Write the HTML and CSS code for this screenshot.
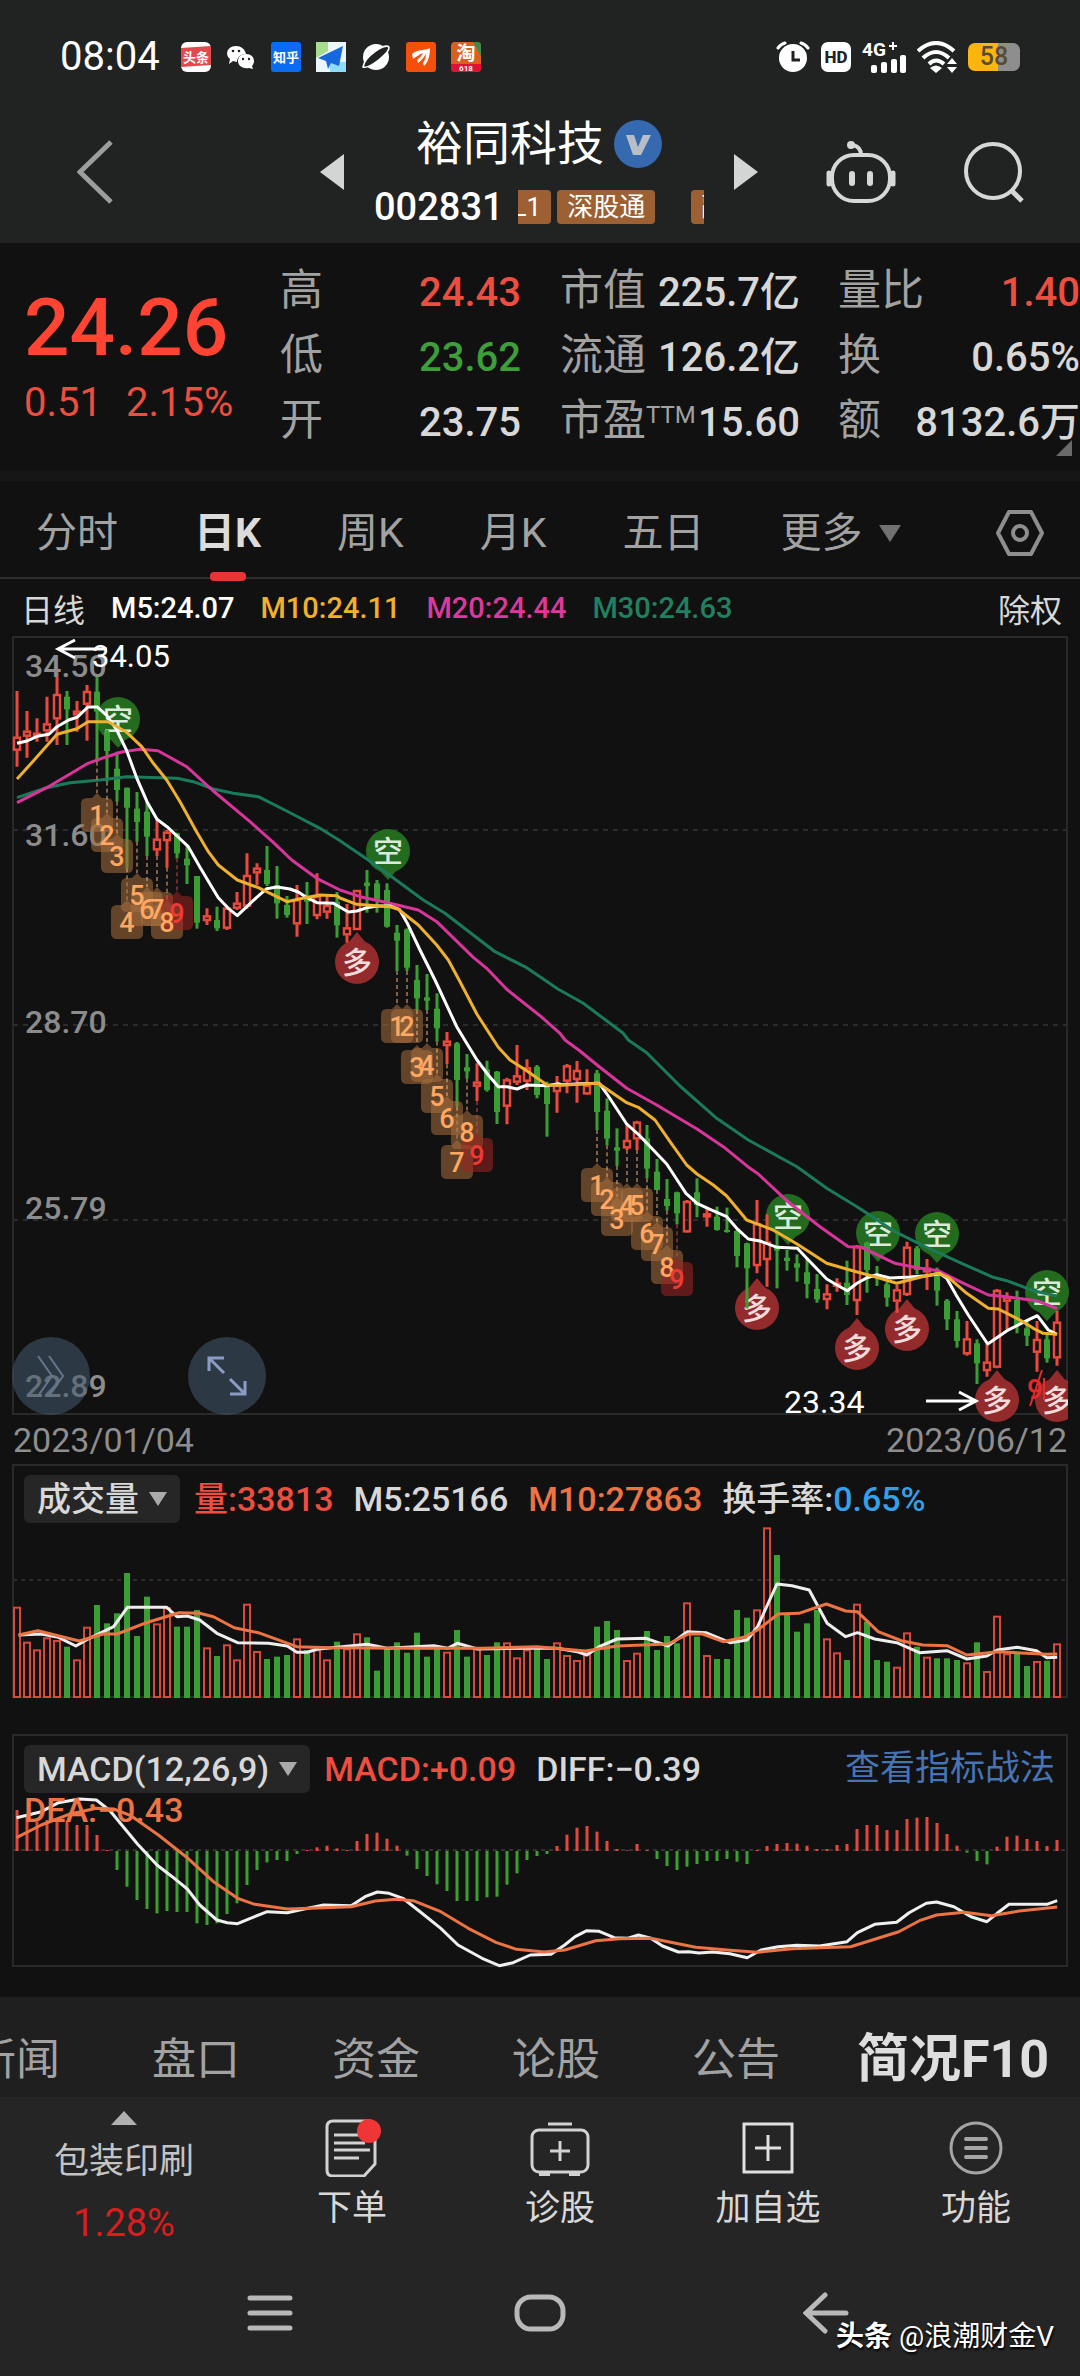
FILE: index.html
```html
<!DOCTYPE html>
<html lang="zh-CN">
<head>
<meta charset="utf-8">
<meta name="viewport" content="width=device-width, initial-scale=1">
<title>裕同科技 002831</title>
<link rel="stylesheet" href="styles.css">
</head>
<body>
<header class="top">
  <div class="status">
    <span class="clock">08:04</span>
    <div class="apps">
      <svg viewBox="0 0 30 30"><rect width="30" height="30" rx="6" fill="#fff"/><path d="M0 6L30 4V23L0 25Z" fill="#e2484c"/><text x="15" y="20" class="app-t" font-size="13">头条</text></svg>
      <svg viewBox="0 0 30 30" fill="#fff"><path d="M10 4c5 0 9 3 10 8-5 0-9 3-9 8l-4-1-4 3 1-5C-2 12 2 4 10 4z"/><path d="M20 12c5 0 8 3 8 7 0 2-1 4-2 5l1 3-4-1c-6 1-11-2-11-7 0-4 3-7 8-7z"/><g fill="#212322"><circle cx="7" cy="9" r="1.300"/><circle cx="13" cy="9" r="1.300"/><circle cx="17" cy="17" r="1.200"/><circle cx="23" cy="17" r="1.200"/></g></svg>
      <svg viewBox="0 0 30 30"><rect width="30" height="30" rx="3" fill="#0a6cf0"/><text x="15" y="20" class="app-t" font-size="13">知乎</text></svg>
      <svg viewBox="0 0 30 30"><rect width="30" height="30" fill="#eaf6fb"/><path d="M0 0h12v9L0 16z" fill="#a9dc8c"/><path d="M14 20h16v10H14z" fill="#8fdcf8"/><path d="M2 16L27 4L23 24L15 21L12 27L10 19Z" fill="#1668dc"/></svg>
      <svg viewBox="0 0 30 30"><circle cx="15" cy="15" r="13" fill="#fff"/><path d="M2 25C8 27 29 11 28 5C24 1 4 14 2 25Z" fill="#212322" stroke="#fff" stroke-width="1.500"/></svg>
      <svg viewBox="0 0 30 30"><rect width="30" height="30" rx="3" fill="#f4500c"/><path d="M6 12C11 7 18 9 24 6C24 14 22 20 18 24L17 21C19 18 20 15 20 12C18 15 16 18 12 21L11 18C14 16 16 13 17 11C14 12 10 15 7 17Z" fill="#fff"/></svg>
      <svg viewBox="0 0 30 30"><rect width="30" height="30" rx="4" fill="#d9611f"/><path d="M22 0h4q4 0 4 4v10z" fill="#3e8a4a"/><path d="M0 22h30v4q0 4-4 4H4q-4 0-4-4z" fill="#dc1236"/><text x="15" y="18" class="app-t" font-size="19">淘</text><text x="15" y="29" class="app-t" font-size="8">618</text></svg>
    </div>
    <div class="system">
      <svg class="w34" viewBox="0 0 34 32"><circle cx="17" cy="17" r="14" fill="#fff"/><path d="M17 10V19H24" fill="none" stroke="#212322" stroke-width="3"/><path d="M2 7Q5 3 9 2M32 7Q29 3 25 2" stroke="#fff" stroke-width="3" fill="none" stroke-linecap="round"/></svg>
      <svg class="w30" viewBox="0 0 30 30"><rect width="30" height="30" rx="7" fill="#fff"/><text x="15" y="21" text-anchor="middle" font-size="17" font-weight="800" fill="#212322">HD</text></svg>
      <svg class="w44" viewBox="0 0 44 32" fill="#fff"><text x="0" y="15" font-size="19" font-weight="700">4G</text><path d="M27 5h8M31 1v8" stroke="#fff" stroke-width="2"/><rect x="9" y="24" width="6" height="8" rx="2"/><rect x="19" y="21" width="6" height="11" rx="2"/><rect x="29" y="18" width="6" height="14" rx="2"/><rect x="38" y="14" width="6" height="18" rx="2"/></svg>
      <svg class="w40" viewBox="0 0 40 32" fill="none" stroke="#fff" stroke-width="4"><path d="M1 10Q19-6 37 10M6 17Q19 5 32 17M12 23Q19 16 27 23"/><path d="M19 32L13 27Q19 22 25 27ZM35 17l5 6h-10zM35 32l5-6h-10z" fill="#fff" stroke="none"/></svg>
      <span class="battery">58</span>
    </div>
  </div>
  <div class="title-row">
    <button class="icon-btn" aria-label="返回"><svg width="36" height="64" viewBox="0 0 36 64" fill="none" stroke="#9c9d9d" stroke-width="5"><path d="M34 2L3 32L34 62"/></svg></button>
    <div class="switcher">
      <button class="icon-btn" aria-label="上一只"><svg width="24" height="36" viewBox="0 0 24 36"><path d="M24 0V36L0 18Z" fill="#d3d5d4"/></svg></button>
      <div class="stock">
        <h1>裕同科技 <svg width="48" height="48" viewBox="0 0 48 48"><circle cx="24" cy="24" r="24" fill="#3569b0"/><path d="M12 15H20L24 27L29 15H37L27 35H19Z" fill="#b9bec6"/></svg></h1>
        <div class="code-row"><span>002831</span><div class="tags"><span class="tag first">L1</span><span class="tag">深股通</span><span class="tag last">融</span></div></div>
      </div>
      <button class="icon-btn" aria-label="下一只"><svg width="24" height="36" viewBox="0 0 24 36"><path d="M0 0V36L24 18Z" fill="#d3d5d4"/></svg></button>
    </div>
    <div class="actions">
      <button class="icon-btn" aria-label="智能助手"><svg width="70" height="64" viewBox="0 0 70 64" fill="none" stroke="#d6d8d7" stroke-width="4" stroke-linecap="round"><path d="M35 15Q35 7 27 5"/><circle cx="25" cy="5" r="2" fill="#d6d8d7"/><rect x="6" y="15" width="58" height="46" rx="22"/><path d="M3 33V44M67 33V44" stroke-width="5"/><path d="M26 34V43M44 34V43" stroke-width="6"/></svg></button>
      <button class="icon-btn" aria-label="搜索"><svg width="62" height="62" viewBox="0 0 62 62" fill="none" stroke="#d6d8d7" stroke-width="4"><circle cx="29" cy="30" r="27"/><path d="M47 49L58 60" stroke-width="5"/></svg></button>
    </div>
  </div>
</header>

<main>
  <section class="quote">
    <div class="price">
      <strong>24.26</strong>
      <div class="change"><span>0.51</span><span>2.15%</span></div>
    </div>
    <dl class="col-a">
      <div><dt>高</dt><dd class="up">24.43</dd></div>
      <div><dt>低</dt><dd class="down">23.62</dd></div>
      <div><dt>开</dt><dd>23.75</dd></div>
    </dl>
    <dl class="col-b">
      <div><dt>市值</dt><dd>225.7亿</dd></div>
      <div><dt>流通</dt><dd>126.2亿</dd></div>
      <div><dt>市盈<sup>TTM</sup></dt><dd>15.60</dd></div>
    </dl>
    <dl class="col-c">
      <div><dt>量比</dt><dd class="up">1.40</dd></div>
      <div><dt>换</dt><dd>0.65%</dd></div>
      <div><dt>额</dt><dd>8132.6万</dd></div>
    </dl>
    <i class="corner"></i>
  </section>

  <nav class="periods">
    <a href="#">分时</a><a href="#" class="on">日K</a><a href="#">周K</a><a href="#">月K</a><a href="#">五日</a><a href="#">更多<i class="caret"></i></a>
    <button class="icon-btn gear" aria-label="设置"><svg width="48" height="48" viewBox="0 0 48 48" fill="none" stroke="#8e8e8e" stroke-width="4" stroke-linejoin="round"><path d="M13 3H35L46 24L35 45H13L2 24Z"/><circle cx="24" cy="24" r="7"/></svg></button>
  </nav>

  <div class="legend"><span class="cjk">日线</span><span class="w">M5:24.07</span><span class="y">M10:24.11</span><span class="p">M20:24.44</span><span class="t">M30:24.63</span><span class="cjk end">除权</span></div>

  <section class="kline">
    <svg id="kline" viewBox="0 636 1080 780" role="img" aria-label="日K线"></svg>
    <button class="round collapse" aria-label="收起"><svg width="30" height="44" viewBox="0 0 30 44" fill="none" stroke="#66758c" stroke-width="2"><path d="M2 2L16 22L2 42M13 2L27 22L13 42"/></svg></button>
    <button class="round expand" aria-label="全屏"><svg width="40" height="40" viewBox="0 0 40 40" fill="none" stroke="#8c9bc4" stroke-width="3"><path d="M2 15V2H17M2 2L17 17M38 25V38H23M38 38L23 23"/></svg></button>
  </section>
  <div class="dates"><time>2023/01/04</time><time>2023/06/12</time></div>

  <section class="panel">
    <svg id="volume" viewBox="0 1464 1080 234" role="img" aria-label="成交量"></svg>
    <div class="panel-head"><button class="pick">成交量<i class="caret"></i></button><span class="up">量:33813</span><span>M5:25166</span><span class="o">M10:27863</span><span>换手率:<b>0.65%</b></span></div>
  </section>

  <section class="panel macd">
    <svg id="macd" viewBox="0 1734 1080 234" role="img" aria-label="MACD"></svg>
    <div class="panel-head"><button class="pick">MACD(12,26,9)<i class="caret"></i></button><span class="up">MACD:+0.09</span><span>DIFF:−0.39</span><a href="#">查看指标战法</a><span class="o dea">DEA:−0.43</span></div>
  </section>
</main>

<nav class="sections"><a href="#">新闻</a><a href="#">盘口</a><a href="#">资金</a><a href="#">论股</a><a href="#">公告</a><a href="#" class="on">简况F10</a></nav>

<footer>
  <div class="toolbar">
    <button class="industry"><i class="tri"></i><span>包装印刷</span><span class="pct">1.28%</span></button>
    <button><svg width="58" height="58" viewBox="0 0 58 58" fill="none" stroke="#d2d2d2" stroke-width="3"><path d="M10 2H46Q52 2 52 8V45L41 57H10Q4 57 4 51V8Q4 2 10 2Z"/><path d="M11 16H38M11 24H42M11 31H47M11 39H36"/><circle cx="46" cy="12" r="12" fill="#ee3636" stroke="none"/></svg>下单</button>
    <button><svg width="60" height="58" viewBox="0 0 60 58" fill="none" stroke="#d2d2d2" stroke-width="3"><rect x="2" y="11" width="56" height="42" rx="7"/><path d="M18 5H42M20 32H40M30 22V42"/><path d="M9 55H20M39 55H50" stroke-width="4"/></svg>诊股</button>
    <button><svg width="54" height="58" viewBox="0 0 54 58" fill="none" stroke="#e0e0e0" stroke-width="3"><rect x="3" y="5" width="48" height="48"/><path d="M14 29H40M27 16V42"/></svg>加自选</button>
    <button><svg width="56" height="58" viewBox="0 0 56 58" fill="none" stroke="#a5a5a5" stroke-width="3"><circle cx="28" cy="29" r="25"/><path d="M18 20H38M18 29H38M18 38H38" stroke-width="4" stroke-linecap="round"/></svg>功能</button>
  </div>
  <div class="sysnav">
    <button class="icon-btn" aria-label="最近任务"><svg width="46" height="42" viewBox="0 0 46 42" stroke="#b9b9b9" stroke-width="5" stroke-linecap="round"><path d="M3 6H43M3 21H43M3 36H43"/></svg></button>
    <button class="icon-btn" aria-label="主页"><svg width="52" height="42" viewBox="0 0 52 42" fill="none" stroke="#b9b9b9" stroke-width="5"><rect x="3" y="5" width="46" height="32" rx="14"/></svg></button>
    <button class="icon-btn" aria-label="返回"><svg width="46" height="42" viewBox="0 0 46 42" fill="none" stroke="#b9b9b9" stroke-width="5" stroke-linecap="round"><path d="M22 3L3 21L22 39M4 21H43"/></svg></button>
  </div>
  <p class="credit"><b>头条</b> @浪潮财金V</p>
</footer>
<script src="chart.js"></script>
</body>
</html>
```

FILE: styles.css
```css
* { box-sizing: border-box; }
body {
  margin: 0;
  background: #111;
  color: #d8d8d8;
  font-family: Roboto, "Noto Sans CJK SC", sans-serif;
  overflow-x: hidden;
}
button { border: 0; padding: 0; background: none; color: inherit; font: inherit; }
a { color: inherit; text-decoration: none; }
svg { display: block; }
.icon-btn { flex: none; }

/* status bar and title */
.top { background: #212322; color: #fff; }
.status { display: flex; align-items: center; height: 114px; padding: 0 60px; }
.clock { font-size: 40px; line-height: 48px; }
.apps { display: flex; gap: 15px; margin-left: 21px; }
.apps svg { width: 30px; height: 30px; }
.app-t { text-anchor: middle; fill: #fff; font-weight: 700; }
.system { display: flex; align-items: center; gap: 11px; margin-left: auto; }
.system svg { height: 32px; }
.w34 { width: 34px; }
.w30 { width: 30px; }
.w44 { width: 44px; }
.w40 { width: 40px; }
.battery {
  width: 52px; height: 28px; border-radius: 7px;
  background: linear-gradient(90deg, #fcb50c 58%, #8e8e8e 58%);
  color: #574c33; font-size: 25px; line-height: 28px; font-weight: 500; text-align: center;
}
.title-row { display: flex; align-items: center; gap: 68px; height: 129px; padding: 0 54px 13px 77px; }
.switcher { display: flex; align-items: center; gap: 30px; margin-left: auto; }
.actions { display: flex; align-items: center; gap: 68px; }
.stock { width: 330px; height: 116px; }
h1 { display: flex; align-items: center; justify-content: center; gap: 10px; margin: 0; font-size: 47px; line-height: 60px; font-weight: 400; }
.code-row { display: flex; align-items: center; gap: 14px; font-size: 38px; line-height: 66px; font-weight: 500; }
.tags { display: flex; gap: 6px; flex: 1; overflow: hidden; }
.tag { flex: none; padding: 0 10px; border-radius: 4px; background: #9c6033; font-size: 26px; line-height: 34px; font-weight: 400; }
.tag.first { margin-left: -15px; }
.tag.last { margin-left: 30px; }

/* quote figures */
.quote { position: relative; display: flex; height: 227px; padding-top: 16px; }
.price { width: 280px; padding: 20px 0 0 24px; color: #ff4433; }
.price strong { display: block; font-size: 80px; line-height: 98px; font-weight: 500; }
.change { display: flex; gap: 24px; font-size: 40px; line-height: 52px; color: #ec4e40; }
dl { margin: 0; }
dl div { display: flex; align-items: center; justify-content: space-between; height: 65px; line-height: 60px; }
dt { font-size: 43px; color: #a2a2a2; white-space: nowrap; padding-bottom: 4px; }
dd { margin: 0; padding-top: 2px; font-size: 40px; font-weight: 500; white-space: nowrap; }
sup { font-size: 24px; line-height: 24px; vertical-align: 12px; }
.col-a { width: 241px; }
.col-b { flex: 1; margin: 0 38px 0 39px; }
.col-c { width: 242px; }
.up { color: #ec4e40; }
.down { color: #3d9e3a; }
.corner { position: absolute; right: 8px; bottom: 14px; border: 8px solid; border-color: transparent #6a6a6a #6a6a6a transparent; }

.periods { display: flex; align-items: center; gap: 76px; height: 109px; padding: 8px 36px 0; border-top: 11px solid #161616; border-bottom: 2px solid #2e2e2e; font-size: 41px; line-height: 60px; color: #a2a2a2; white-space: nowrap; }
.periods a { display: flex; align-items: center; }
.periods .on { position: relative; color: #dcdcdc; font-weight: 700; }
.periods .on::after { content: ""; position: absolute; left: 50%; bottom: -18px; width: 36px; height: 9px; margin-left: -18px; border-radius: 4px; background: #e83434; }
.caret { flex: none; border: 11px solid transparent; border-top: 17px solid #717171; border-bottom: 0; margin-left: 16px; }
.gear { margin-left: auto; }
.legend { display: flex; align-items: center; gap: 26px; height: 57px; padding-left: 21px; padding-right: 18px; font-size: 29px; font-weight: 500; white-space: nowrap; }
.legend .cjk { font-size: 32px; font-weight: 400; }
.legend .w { color: #fff; }
.legend .y { color: #f0b02c; }
.legend .p { color: #db3a9c; }
.legend .t { color: #218060; }
.legend .end { margin-left: auto; }

/* charts */
.kline { position: relative; }
.kline svg, .panel svg { overflow: visible; }
#kline, #volume, #macd { width: 100%; height: auto; }
.round { position: absolute; bottom: 1px; display: flex; align-items: center; justify-content: center; width: 78px; height: 78px; border-radius: 50%; background: rgba(68, 90, 110, .55); }
.collapse { left: 12px; }
.expand { left: 188px; }
.dates { display: flex; justify-content: space-between; height: 48px; padding: 0 13px; font-size: 34px; line-height: 48px; color: #8e8e8e; }
.panel { display: grid; }
.panel > * { grid-area: 1 / 1; }
.panel-head { z-index: 1; display: flex; flex-wrap: wrap; align-content: flex-start; align-items: center; column-gap: 20px; padding: 11px 25px 0 24px; font-size: 34px; font-weight: 500; line-height: 48px; white-space: nowrap; }
.panel-head .caret { border-width: 14px 9px 0; border-top-color: #aaa; margin-left: 10px; }
.panel-head b { color: #35a0ea; font-weight: 500; }
.panel-head a { margin-left: auto; color: #4674b4; font-size: 35px; font-weight: 400; }
.pick { display: flex; align-items: center; height: 48px; padding: 0 13px; border-radius: 6px; background: #262626; margin-right: -6px; }
.o { color: #ec7444; }
.dea { width: 100%; line-height: 34px; }
.macd { margin-top: 36px; margin-bottom: 29px; }

/* bottom */
.sections { display: flex; align-items: center; gap: 92px; height: 100px; padding-top: 26px; background: #1f1f1f; overflow: hidden; font-size: 44px; line-height: 60px; color: #a2a2a2; white-space: nowrap; }
.sections a:first-child { margin-left: -28px; }
.sections .on { margin-left: -15px; color: #dedede; font-size: 52px; font-weight: 700; }
footer { position: relative; background: #252525; }
.toolbar { display: grid; grid-template-columns: 248px repeat(4, 1fr); height: 153px; font-size: 35px; line-height: 48px; }
.toolbar button { display: flex; flex-direction: column; align-items: center; gap: 8px; padding-top: 22px; }
.toolbar .industry { gap: 13px; padding-top: 14px; color: #c4c4c4; }
.tri { border: 13px solid transparent; border-bottom: 14px solid #b0b0b0; border-top: 0; }
.pct { font-size: 38px; color: #d81e1e; }
.sysnav { display: flex; align-items: center; justify-content: space-between; height: 126px; padding: 0 231px 0 247px; }
.sysnav :nth-child(2) { margin-right: 16px; }
.credit { position: absolute; right: 26px; bottom: 20px; margin: 0; color: #fff; font-size: 28px; line-height: 38px; text-shadow: 1px 2px 2px #000; }
```

FILE: chart.js
```js
const RED = '#ea4a3c', GREEN = '#3a9e35', ORANGE = '#ec7444';
const xAt = i => 17 + 10 * i;

// direction, high, low, body top, body bottom; three runs, each with its own base
const runs = [
  [630, `r183,410,320,362 r243,383,302,320 r265,335,308,320 r200,335,280,304 r115,345,192,268 g183,345,200,238 r213,305,242,256 r165,332,183,224 g140,395,185,245 g300,455,305,363 g365,515,416,480 g473,715,473,533 g486,635,536,576 g515,678,545,620 r570,678,626,661 r600,713,605,633 g608,685,610,670 g650,762,686,706 g738,896,738,878 r835,885,856,873 g830,903,870,895 r833,900,833,896 r786,840,818,836 r670,836,735,830 r700,766,713,730 g648,768,720,762 g708,866,765,820 g798,863,825,855 r765,920,808,883 g756,882,800,815 r730,868,798,858 r795,866,825,848 g786,923,815,886`],
  [780, `r372,488,442,466 r330,450,330,450 g270,398,308,318 g300,398,310,360 g310,443,330,440 g435,573,458,482 g445,573,448,563 g555,690,600,655 g582,690,652,662 g640,785,686,745 r756,853,782,798 g786,980,790,900 g822,896,862,874 r850,963,905,920 g842,935,868,930 g873,1032,875,996 r893,1033,898,980 r795,915,886,908 r838,930,862,905 g855,955,860,945 g905,1070,912,972 r888,998,915,936 r852,940,856,905 r843,968,870,900 r868,945,915,943 g870,1050,880,996 g955,1096,992,1076 g1045,1158,1102,1112 r1030,1110,1080,1105 r1022,1110,1025,1078`],
  [1040, `g255,415,295,386 g357,450,395,450 g417,512,477,498 g455,553,457,520 r480,578,483,577 g415,532,457,495 r505,560,520,530 g500,572,530,570 g503,578,570,576 g570,682,573,648 g608,805,610,685 r480,700,550,678 r523,740,605,660 g580,745,620,632 g630,692,653,663 g643,725,670,683 g655,775,697,732 g702,788,747,778 r733,808,760,780 r715,755,728,735 g662,795,728,765 r615,825,618,783 g605,758,608,690 g678,738,703,712 g725,800,733,773 r735,818,748,785 r605,768,620,765 g618,703,625,690 r657,750,683,697 g683,797,698,752 g777,870,782,838 g813,923,838,903 r843,947,895,943 g898,1032,910,970 r912,1010,965,993 r747,985,750,983 r757,868,770,785 g752,880,780,855 g840,918,865,887 r843,995,897,938 g885,968,898,955 r812,977,845,955`]
];
const candles = runs.flatMap(([base, rows]) => rows.split(' ').map(r => {
  const [hi, lo, top, bot] = r.slice(1).split(',').map(v => base + v / 3);
  return { up: r[0] === 'r', hi, lo, top, bot };
}));

const scale = (s, x0, y0, kx, ky) => s.split(' ').map(p => {
  const [x, y] = p.split(',');
  return `${(x0 + x / kx).toFixed(1)},${(y0 + y / ky).toFixed(1)}`;
}).join(' ');
const line = (pts, color, w = 3) =>
  `<polyline points="${pts}" fill="none" stroke="${color}" stroke-width="${w}" stroke-linejoin="round"/>`;
const joined = (a, b, c) => [scale(a, 0, 630, 3, 3), scale(b, 340, 780, 3, 3), scale(c, 560, 1040, 3, 3)].join(' ');
const label = (x, cy, s, size, color, extra = '') =>
  `<text x="${x}" y="${cy + Math.round(size * 0.36)}" font-size="${size}" fill="${color}" ${extra}>${s}</text>`;
const frame = (y, h) => `<rect x="13" y="${y}" width="1054" height="${h}" fill="none" stroke="#292929" stroke-width="2"/>`;

// daily candles
let k = frame(637, 777);
for (const y of [830, 1025, 1220]) k += `<path d="M13 ${y}H1067" stroke="#2c2c2c" stroke-width="2" stroke-dasharray="5 5"/>`;

for (const [x, y] of [[118, 719], [388, 851], [788, 1216], [878, 1233], [937, 1234], [1047, 1292]])
  k += `<circle cx="${x}" cy="${y}" r="22" fill="#236b1e"/><path d="M${x - 9} ${y + 19}L${x} ${y + 29}L${x + 9} ${y + 19}" fill="#236b1e"/>` +
    label(x, y, '空', 30, '#dceadb', 'text-anchor="middle" font-weight="500"');
for (const [x, y] of [[357, 962], [757, 1308], [857, 1348], [907, 1329], [997, 1400], [1057, 1400]])
  k += `<g${x > 1050 ? ' clip-path="url(#edge)"' : ''}><circle cx="${x}" cy="${y}" r="22" fill="#932b2d"/><path d="M${x - 9} ${y - 19}L${x} ${y - 30}L${x + 9} ${y - 19}" fill="#932b2d"/>` +
    label(x, y, '多', 30, '#f2dcdc', 'text-anchor="middle" font-weight="500"') + '</g>';
k += '<clipPath id="edge"><rect x="0" y="636" width="1068" height="800"/></clipPath>';

candles.forEach((c, i) => {
  const x = xAt(i);
  if (c.up) {
    k += `<path d="M${x} ${c.hi}V${c.top}M${x} ${c.bot}V${Math.max(c.lo, c.bot)}" stroke="${RED}" stroke-width="3"/>` +
      `<rect x="${x - 3}" y="${c.top + 1}" width="6" height="${Math.max(c.bot - c.top - 2, 2)}" fill="none" stroke="${RED}" stroke-width="2.500"/>`;
  } else {
    k += `<path d="M${x} ${c.hi}V${c.lo}" stroke="${GREEN}" stroke-width="3"/>` +
      `<rect x="${x - 3}" y="${c.top}" width="6" height="${c.bot - c.top}" fill="${GREEN}"/>`;
  }
});

k += line(joined(
  '51,503 140,473 210,458 300,450 380,440 531,445 580,455 640,477 700,490 775,500 860,543 960,595 1020,632',
  '0,182 85,240 145,283 250,360 315,400 465,515 560,563 655,628 730,670 850,760',
  '205,0 260,38 360,138 470,235 565,300 711,380 800,445 891,500 1005,575 1085,615 1200,668 1300,712 1340,722 1420,752 1491,768'), '#1b7a5c');
k += line(joined(
  '51,518 140,473 210,432 264,400 320,380 365,366 420,358 474,362 560,410 640,483 750,575 820,637 875,690 950,745',
  '0,330 60,350 150,370 235,390 290,425 400,532 440,565 500,628 600,707 660,760',
  '15,0 60,33 115,78 200,145 290,195 411,267 490,320 570,385 595,402 680,482 780,560 865,620 905,622 1005,670 1071,683 1135,692 1200,725 1285,765 1340,770 1430,782 1491,806'), '#d8359a');
k += line(joined(
  '51,340 81,333 111,319 146,313 171,290 206,270 231,262 264,231 292,231 320,256 350,300 380,362 411,446 441,515 471,568 501,590 531,618 565,650 600,712 630,762 655,803 685,835 712,857 770,802 800,776 831,771 870,777 895,786 921,803 951,818 1000,820',
  '25,396 51,393 81,383 111,378 150,378 178,388 201,428 240,510 285,600 350,740 380,790 411,840 445,885 475,920 501,920 531,927 561,915 621,917 655,911',
  '5,134 60,131 118,130 145,168 200,252 235,283 320,372 350,418 378,460 411,490 450,508 500,530 530,565 565,597 600,603 651,622 712,625 740,655 800,717 840,740 862,752 891,730 921,713 950,704 990,714 1050,711 1100,707 1140,701 1160,715 1190,768 1225,825 1283,912 1341,872 1400,842 1432,827 1465,870 1491,883'), '#fff');
k += line(joined(
  '51,447 100,393 171,313 231,296 264,275 325,275 380,307 425,350 460,400 500,450 540,515 590,606 625,665 655,705 712,750 775,773 861,815 900,806 960,795 1011,797',
  '0,354 50,373 150,380 175,388 235,435 290,495 325,540 360,605 411,703 475,802 510,840 560,872 621,915',
  '0,136 115,130 200,188 235,202 285,240 330,305 380,375 411,402 460,435 500,468 560,540 640,570 711,612 800,670 870,690 950,712 1010,730 1080,712 1135,700 1165,712 1220,760 1285,805 1315,807 1380,840 1420,865 1450,880 1491,883'), '#eeb02e');

[[25, 665, '34.50'], [25, 834, '31.60'], [25, 1021, '28.70'], [25, 1207, '25.79'], [25, 1385, '22.89']]
  .forEach(([x, y, s]) => { k += label(x, y, s, 32, '#8c8c8c', 'font-weight="500"'); });

// nine-turn counts, each hung under its own candle
const counts = [
  [8, [815, 835, 856, 922, 895, 909, 909, 922, 913]],
  [38, [1026, 1026, 1067, 1065, 1096, 1118, 1162, 1132, 1155]],
  [58, [1185, 1199, 1219, 1205, 1205, 1233, 1244, 1267, 1279]]
];
for (const [start, ys] of counts) ys.forEach((y, n) => {
  const x = xAt(start + n), nine = n === 8;
  k += `<path d="M${x} ${candles[start + n].lo}V${y - 22}" stroke="${nine ? '#d04848' : '#f0b27c'}" stroke-width="1" stroke-dasharray="4 3"/>` +
    `<path d="M${x - 10} ${y - 17}H${x - 5}L${x} ${y - 22}L${x + 5} ${y - 17}H${x + 10}Q${x + 16} ${y - 17} ${x + 16} ${y - 11}V${y + 11}Q${x + 16} ${y + 17} ${x + 10} ${y + 17}H${x - 10}Q${x - 16} ${y + 17} ${x - 16} ${y + 11}V${y - 11}Q${x - 16} ${y - 17} ${x - 10} ${y - 17}Z" fill="${nine ? '#a02222' : '#a8703e'}" fill-opacity=".55"/>`;
});
for (const [start, ys] of counts) ys.forEach((y, n) => {
  k += label(xAt(start + n), y, n + 1, 27, n === 8 ? '#ee3a34' : '#ffa763', 'text-anchor="middle" font-weight="500"');
});
k += label(1027, 1389, '9', 28, '#e62a2a', 'font-weight="500"') + '<path d="M1044 1378V1400M1042 1370L1030 1406" stroke="#e62a2a" stroke-width="2"/>';

k += label(92, 656, '34.05', 31, '#fff') + '<path d="M75 640L58 649L75 658M58 649H107" fill="none" stroke="#fff" stroke-width="3"/>';
k += label(784, 1401, '23.34', 32, '#fff') + '<path d="M959 1392L976 1401L959 1410M926 1401H976" fill="none" stroke="#fff" stroke-width="3"/>';
document.getElementById('kline').innerHTML = k;

// volume
const tops = [830,935,958,922,930,950,988,890,825,880,850,729,918,800,880,832,890,890,840,952,978,943,988,821,963,987,980,975,925,960,958,988,935,955,910,922,1022,955,937,968,908,980,948,965,900,980,955,975,937,937,982,958,950,987,937,975,990,965,890,873,900,990,968,903,960,918,940,817,920,975,987,987,840,863,838,592,675,850,905,880,840,925,967,990,821,875,990,995,1010,907,950,980,985,985,990,997,937,1023,857,970,970,1008,993,992,940];
let v = frame(1465, 232) + '<path d="M13 1580H1067" stroke="#2c2c2c" stroke-width="2" stroke-dasharray="4 4"/>';
tops.forEach((t, i) => {
  const y = 1330 + t / 3, x = xAt(i);
  v += candles[i].up
    ? `<rect x="${x - 3}" y="${y + 1}" width="6" height="${1696 - y}" fill="none" stroke="#d9483c" stroke-width="2"/>`
    : `<rect x="${x - 3}" y="${y}" width="6" height="${1698 - y}" fill="${GREEN}"/>`;
});
v += line(scale('27,915 60,912 85,922 110,948 130,925 165,890 185,832 242,832 257,860 272,858 290,870 315,910 345,938 390,940 417,948 431,967 446,967 460,958 533,943 562,955 630,947 650,955 664,940 693,957 765,955 809,955 838,965 852,975 870,950 896,927 938,925 970,948 998,905 1025,908 1060,938 1085,930 1100,890 1128,762 1150,767 1175,780 1201,880 1228,920 1245,908 1270,927 1302,938 1335,968 1375,962 1404,987 1433,978 1448,960 1477,952 1505,962 1520,983 1535,982', 0, 1330, 1.452, 3), '#eee');
v += line(scale('27,915 55,902 115,933 150,912 170,912 210,880 260,848 290,850 310,860 340,893 375,908 431,950 480,953 600,955 700,955 780,950 850,963 896,948 970,942 1000,912 1020,912 1050,935 1080,922 1100,900 1130,852 1160,850 1200,822 1228,843 1245,845 1275,905 1310,933 1340,945 1375,947 1404,975 1450,965 1520,973 1535,972', 0, 1330, 1.452, 3), ORANGE);
document.getElementById('volume').innerHTML = v;

// MACD
const hist = [300,320,335,330,325,335,345,345,375,420,480,530,570,597,610,603,606,606,640,645,640,612,580,525,480,457,450,453,432,420,412,407,415,420,393,372,368,386,407,437,477,498,523,543,573,573,573,562,560,524,490,450,438,432,408,374,353,348,365,393,417,421,402,420,447,468,480,470,462,453,453,447,455,462,420,408,402,399,401,407,417,417,405,402,357,345,345,360,360,327,323,321,339,372,407,428,453,463,410,380,377,387,393,408,390];
let m = frame(1735, 231) + '<path d="M13 1850H1067" stroke="#333" stroke-width="2" stroke-dasharray="4 4"/>';
hist.forEach((h, i) => {
  m += `<path d="M${xAt(i)} 1851V${1710 + h / 3}" stroke="${h < 423 ? '#e2483b' : '#3aa02e'}" stroke-width="3"/>`;
});
m += line(scale('24,323 60,305 85,278 115,267 140,270 160,303 200,403 228,465 250,500 272,537 290,585 315,630 330,638 345,641 360,628 388,605 417,608 440,598 470,585 510,587 530,560 548,546 565,550 585,565 610,605 640,655 665,705 700,745 725,767 745,758 770,735 800,733 820,705 835,680 852,662 870,664 892,683 912,685 927,675 945,685 962,708 985,726 1000,725 1015,729 1035,726 1060,731 1085,743 1105,720 1130,710 1157,706 1190,708 1230,695 1245,668 1270,643 1302,637 1320,608 1345,580 1360,576 1385,590 1410,620 1433,635 1448,610 1465,583 1520,583 1535,572', 0, 1710, 1.452, 3), '#f0f0f0');
m += line(scale('24,383 60,345 100,313 140,295 165,297 190,317 230,375 270,440 310,515 345,565 370,583 417,597 470,593 510,590 545,573 575,568 600,572 640,605 680,655 720,697 750,718 790,726 820,720 865,692 900,686 945,685 1010,712 1060,721 1100,727 1150,716 1190,713 1235,710 1270,688 1305,665 1335,632 1360,615 1400,607 1440,617 1480,603 1535,591', 0, 1710, 1.452, 3), ORANGE);
document.getElementById('macd').innerHTML = m;
```
